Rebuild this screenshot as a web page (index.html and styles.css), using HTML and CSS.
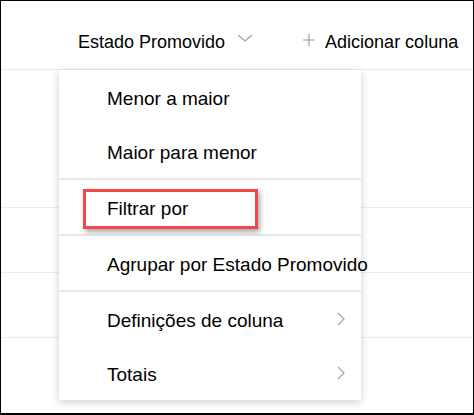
FILE: index.html
```html
<!DOCTYPE html>
<html lang="pt">
<head>
    <meta charset="UTF-8">
    <title>Estado Promovido</title>
    <link rel="stylesheet" href="styles.css">
</head>
<body>
    <div class="frame">
        <!-- cabeçalho da lista -->
        <div class="header">
            <span class="col-title">Estado Promovido</span>
            <svg class="caret" width="16" height="8" viewBox="0 0 16 8"><path d="M1 1 L8 7 L15 1" fill="none" stroke="#a0a0a0" stroke-width="1.2"/></svg>
            <span class="add-col">
                <svg class="plus" width="12" height="12" viewBox="0 0 12 12"><path d="M6 0 V12 M0 6 H12" stroke="#a0a0a0" stroke-width="1.2"/></svg>
                Adicionar coluna
            </span>
        </div>
        <div class="row tall"></div>
        <div class="row"></div>
        <div class="row"></div>

        <!-- menu da coluna -->
        <div class="menu">
            <div class="section">
                <div class="item">Menor a maior</div>
                <div class="item">Maior para menor</div>
            </div>
            <div class="section">
                <div class="item">Filtrar por<span class="highlight"></span></div>
            </div>
            <div class="section">
                <div class="item">Agrupar por Estado Promovido</div>
            </div>
            <div class="section">
                <div class="item">Definições de coluna
                    <svg class="arrow" width="8" height="14" viewBox="0 0 8 14"><path d="M1 1 L7 7 L1 13" fill="none" stroke="#a6a6a6" stroke-width="1.2"/></svg>
                </div>
                <div class="item">Totais
                    <svg class="arrow" width="8" height="14" viewBox="0 0 8 14"><path d="M1 1 L7 7 L1 13" fill="none" stroke="#a6a6a6" stroke-width="1.2"/></svg>
                </div>
            </div>
        </div>
    </div>
</body>
</html>
```

FILE: styles.css
```css
body {
    margin: 0;
    font-family: "Liberation Sans", Arial, sans-serif;
    color: #000;
    background-color: #fff;
}
.frame {
    position: relative;
    width: 474px;
    height: 415px;
    box-sizing: border-box;
    border: 1px solid #000;
    border-bottom-width: 2px;
    overflow: hidden;
}
.header {
    display: flex;
    align-items: center;
    box-sizing: border-box;
    height: 69px;
    padding: 14px 0 0 77px;
    border-bottom: 1px solid #ececec;
    font-size: 18px;
}
.caret {
    margin-left: 12px;
    margin-bottom: 9px;
}
.add-col {
    display: flex;
    align-items: center;
    margin-left: 50px;
}
.plus {
    margin-right: 10px;
    margin-bottom: 4px;
}
.row {
    height: 64px;
    border-bottom: 1px solid #ececec;
}
.row.tall {
    height: 137px;
}
.menu {
    position: absolute;
    left: 58px;
    top: 69px;
    width: 302px;
    background-color: #fff;
    border-radius: 2px;
    box-shadow: 0 2px 8px rgba(0, 0, 0, 0.2);
}
.section {
    border-bottom: 2px solid #e6e6e6;
}
.section:last-child {
    border-bottom: none;
}
.item {
    position: relative;
    display: flex;
    align-items: center;
    justify-content: space-between;
    box-sizing: border-box;
    height: 54px;
    padding: 4px 16px 0 48px;
    font-size: 19px;
    white-space: nowrap;
}
.arrow {
    flex-shrink: 0;
    margin-bottom: 5px;
}
.highlight {
    position: absolute;
    left: 24px;
    top: 9px;
    width: 169px;
    height: 34px;
    border: 3px solid #f04848;
    box-shadow: 2px 3px 5px rgba(0, 0, 0, 0.35);
}
```
